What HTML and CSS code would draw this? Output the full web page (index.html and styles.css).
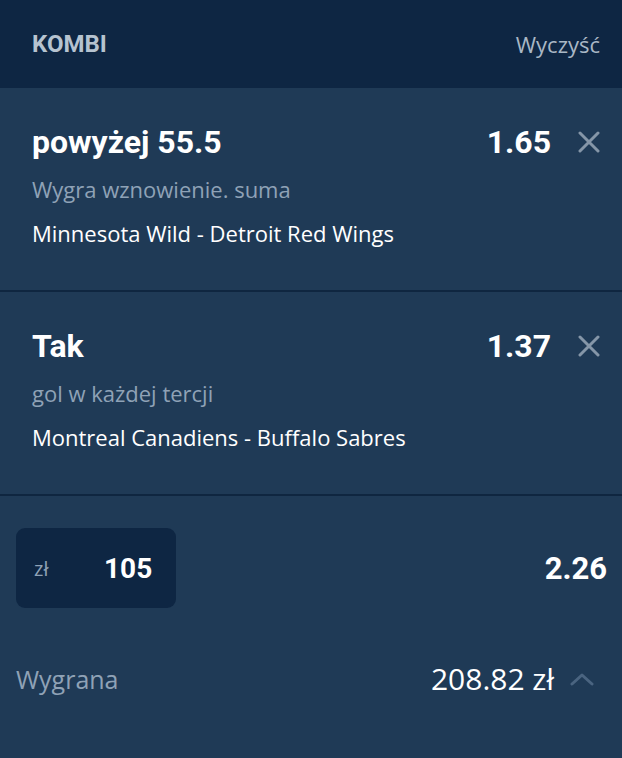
FILE: index.html
```html
<!DOCTYPE html>
<html lang="pl">
<head>
    <meta charset="UTF-8">
    <meta name="viewport" content="width=device-width, initial-scale=1.0">
    <title>Kupon</title>
    <link rel="stylesheet" href="styles.css">
</head>
<body>
    <div class="slip">
        <header class="slip-header">
            <span class="slip-title">KOMBI</span>
            <button class="clear-button">Wyczyść</button>
        </header>

        <div class="bet">
            <div class="bet-top">
                <span class="bet-pick">powyżej 55.5</span>
                <span class="bet-odds">1.65</span>
                <button class="remove-button" aria-label="Usuń">
                    <svg width="22" height="22" viewBox="0 0 22 22"><path d="M2 2 L20 20 M20 2 L2 20" stroke="currentColor" stroke-width="3" stroke-linecap="round"/></svg>
                </button>
            </div>
            <div class="bet-market">Wygra wznowienie. suma</div>
            <div class="bet-event">Minnesota Wild - Detroit Red Wings</div>
        </div>

        <div class="bet">
            <div class="bet-top">
                <span class="bet-pick">Tak</span>
                <span class="bet-odds">1.37</span>
                <button class="remove-button" aria-label="Usuń">
                    <svg width="22" height="22" viewBox="0 0 22 22"><path d="M2 2 L20 20 M20 2 L2 20" stroke="currentColor" stroke-width="3" stroke-linecap="round"/></svg>
                </button>
            </div>
            <div class="bet-market">gol w każdej tercji</div>
            <div class="bet-event">Montreal Canadiens - Buffalo Sabres</div>
        </div>

        <div class="stake-row">
            <div class="stake-box">
                <span class="stake-currency">zł</span>
                <span class="stake-value">105</span>
            </div>
            <span class="total-odds">2.26</span>
        </div>

        <div class="win-row">
            <span class="win-label">Wygrana</span>
            <span class="win-amount">208.82 zł</span>
            <svg class="win-chevron" width="24" height="14" viewBox="0 0 24 14"><path d="M2 12 L12 3 L22 12" fill="none" stroke="currentColor" stroke-width="3" stroke-linecap="round" stroke-linejoin="round"/></svg>
        </div>
    </div>
</body>
</html>
```

FILE: styles.css
```css
:root {
    --header-bg: #0e2643;
    --body-bg: #1f3a56;
    --divider: #0f2640;
    --text-main: #ffffff;
    --text-muted: #8fa2b6;
    --icon-color: #8596a8;
}

body {
    margin: 0;
    padding: 0;
    background-color: var(--body-bg);
    font-family: "Open Sans", sans-serif;
    color: var(--text-main);
}

button {
    font: inherit;
    background: none;
    border: none;
    padding: 0;
    cursor: pointer;
}

.slip {
    width: 622px;
    min-height: 758px;
    background-color: var(--body-bg);
}

.slip-header {
    display: flex;
    justify-content: space-between;
    align-items: center;
    height: 88px;
    padding: 0 22px 0 32px;
    box-sizing: border-box;
    background-color: var(--header-bg);
}

.slip-title {
    font-family: Roboto, sans-serif;
    font-weight: 700;
    font-size: 24px;
    color: #b6c3d0;
}

.clear-button {
    font-size: 22px;
    color: #a9b7c5;
}

.bet {
    height: 204px;
    padding: 34px 22px 0 32px;
    box-sizing: border-box;
    border-bottom: 2px solid var(--divider);
}

.bet-top {
    display: flex;
    align-items: center;
    height: 40px;
}

.bet-pick {
    flex: 1;
    font-family: Roboto, sans-serif;
    font-weight: 700;
    font-size: 32px;
}

.bet-odds {
    font-family: Roboto, sans-serif;
    font-weight: 700;
    font-size: 32px;
}

.remove-button {
    display: flex;
    margin-left: 27px;
    color: var(--icon-color);
}

.bet-market {
    margin-top: 12px;
    font-size: 22px;
    color: var(--text-muted);
}

.bet-event {
    margin-top: 14px;
    font-size: 22px;
}

.stake-row {
    display: flex;
    justify-content: space-between;
    align-items: center;
    padding: 32px 15px 0 16px;
}

.stake-box {
    display: flex;
    align-items: center;
    width: 160px;
    height: 80px;
    padding-left: 18px;
    box-sizing: border-box;
    border-radius: 9px;
    background-color: var(--header-bg);
}

.stake-currency {
    width: 70px;
    font-size: 20px;
    color: var(--text-muted);
}

.stake-value {
    font-family: Roboto, sans-serif;
    font-weight: 700;
    font-size: 28px;
}

.total-odds {
    font-family: Roboto, sans-serif;
    font-weight: 700;
    font-size: 31px;
}

.win-row {
    display: flex;
    align-items: center;
    padding: 50px 28px 0 16px;
}

.win-label {
    flex: 1;
    font-size: 25px;
    color: var(--text-muted);
}

.win-amount {
    font-size: 30px;
}

.win-chevron {
    margin-left: 16px;
    color: #4a6480;
}
```
